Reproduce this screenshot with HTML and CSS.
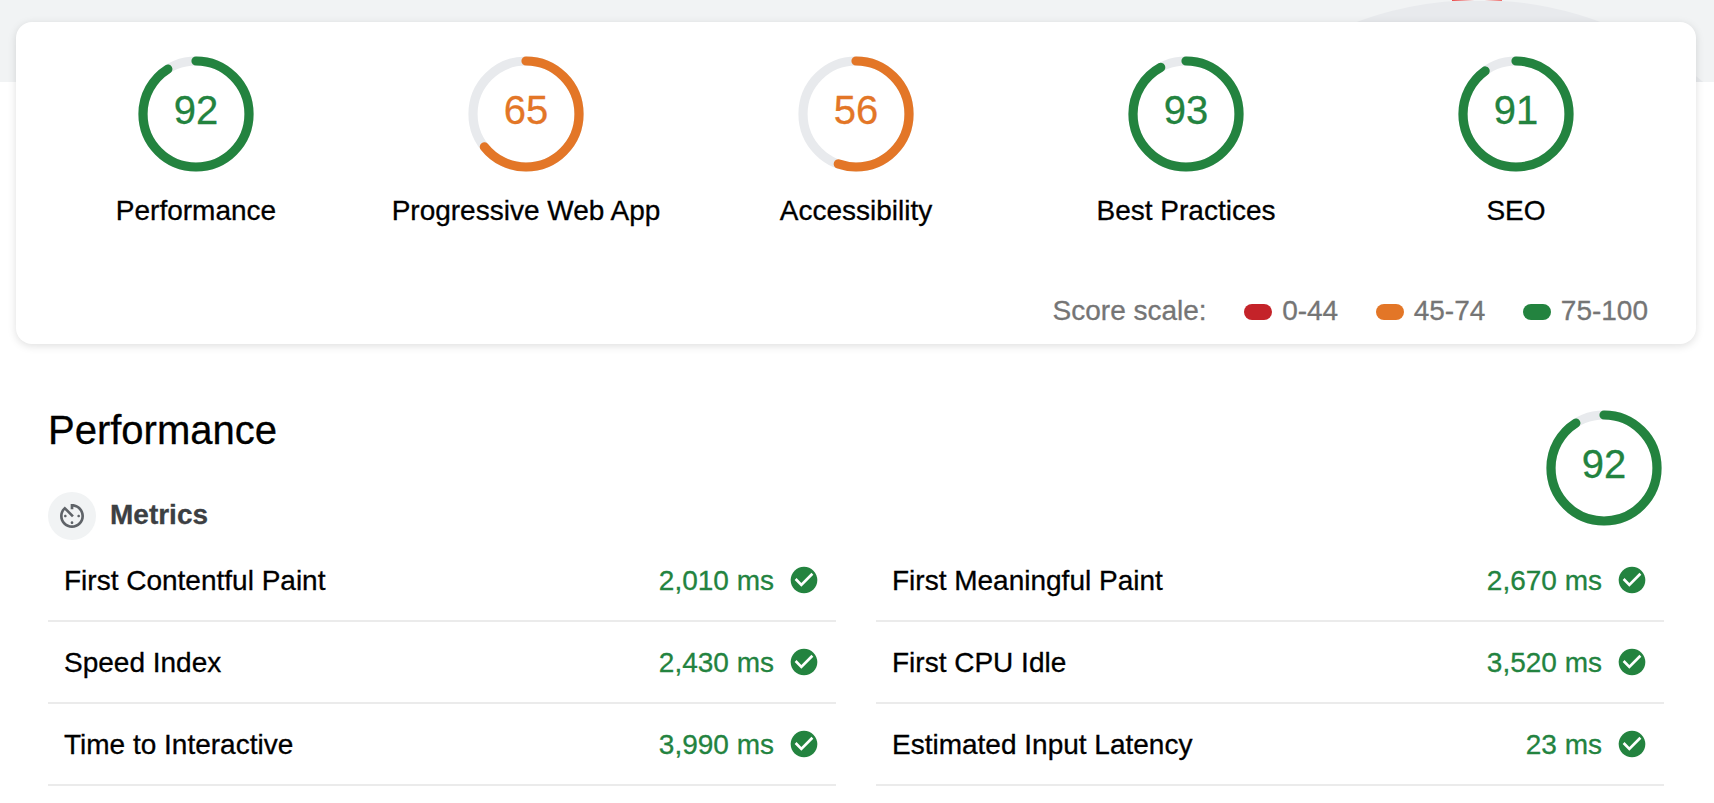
FILE: index.html
```html
<!DOCTYPE html>
<html lang="en">
<head>
<meta charset="utf-8">
<title>Lighthouse Report</title>
<link rel="stylesheet" href="styles.css">
</head>
<body>
<svg class="defs" width="0" height="0" aria-hidden="true">
  <symbol id="check" viewBox="0 0 24 24"><path fill="#23833f" d="M12 2C6.48 2 2 6.48 2 12s4.48 10 10 10 10-4.48 10-10S17.52 2 12 2z"/><path fill="#fff" d="M10 17l-5-5 1.41-1.41L10 14.17l7.59-7.59L19 8l-9 9z"/></symbol>
</svg>
<header class="banner">
  <svg class="banner-art" width="1714" height="82" viewBox="0 0 1714 82">
    <defs><linearGradient id="beam"><stop offset="0" stop-color="#eb4b4b"/><stop offset=".45" stop-color="#f1f3f4"/><stop offset=".65" stop-color="#f1f3f4"/><stop offset="1" stop-color="#ee6a68"/></linearGradient></defs>
    <circle cx="1478.5" cy="349" r="349" fill="#e8eaed"/>
    <rect x="1452" y="0" width="50" height="1" fill="url(#beam)"/>
  </svg>
</header>
<main>
  <section class="card">
    <div class="scores">
      <div class="score pass"><div class="gauge"><svg viewBox="0 0 120 120"><circle class="track" cx="60" cy="60" r="53"/><circle class="arc" cx="60" cy="60" r="53" pathLength="101" stroke-dasharray="92 101"/></svg><span>92</span></div><div class="label">Performance</div></div>
      <div class="score average"><div class="gauge"><svg viewBox="0 0 120 120"><circle class="track" cx="60" cy="60" r="53"/><circle class="arc" cx="60" cy="60" r="53" pathLength="101" stroke-dasharray="65 101"/></svg><span>65</span></div><div class="label">Progressive Web App</div></div>
      <div class="score average"><div class="gauge"><svg viewBox="0 0 120 120"><circle class="track" cx="60" cy="60" r="53"/><circle class="arc" cx="60" cy="60" r="53" pathLength="101" stroke-dasharray="56 101"/></svg><span>56</span></div><div class="label">Accessibility</div></div>
      <div class="score pass"><div class="gauge"><svg viewBox="0 0 120 120"><circle class="track" cx="60" cy="60" r="53"/><circle class="arc" cx="60" cy="60" r="53" pathLength="101" stroke-dasharray="93 101"/></svg><span>93</span></div><div class="label">Best Practices</div></div>
      <div class="score pass"><div class="gauge"><svg viewBox="0 0 120 120"><circle class="track" cx="60" cy="60" r="53"/><circle class="arc" cx="60" cy="60" r="53" pathLength="101" stroke-dasharray="91 101"/></svg><span>91</span></div><div class="label">SEO</div></div>
    </div>
    <div class="scale">
      <span>Score scale:</span>
      <span class="range fail">0-44</span>
      <span class="range average">45-74</span>
      <span class="range pass">75-100</span>
    </div>
  </section>
  <section class="category">
    <div class="category-head">
      <div>
        <h1>Performance</h1>
        <h2><span class="group-icon"><svg width="32" height="32" viewBox="0 0 24 24" fill="#5f6368"><path d="M11 17c0 .55.45 1 1 1s1-.45 1-1-.45-1-1-1-1 .45-1 1zm0-14v4h2V5.08c3.39.49 6 3.39 6 6.92 0 3.87-3.13 7-7 7s-7-3.13-7-7c0-1.68.59-3.22 1.58-4.42L12 13l1.41-1.41-6.8-6.8v.02C4.42 6.45 3 9.05 3 12c0 4.97 4.02 9 9 9 4.97 0 9-4.03 9-9s-4.03-9-9-9h-1zm7 9c0-.55-.45-1-1-1s-1 .45-1 1 .45 1 1 1 1-.45 1-1zM6 12c0 .55.45 1 1 1s1-.45 1-1-.45-1-1-1-1 .45-1 1z"/></svg></span><span class="group-title">Metrics</span></h2>
      </div>
      <div class="score pass"><div class="gauge"><svg viewBox="0 0 120 120"><circle class="track" cx="60" cy="60" r="53"/><circle class="arc" cx="60" cy="60" r="53" pathLength="101" stroke-dasharray="92 101"/></svg><span>92</span></div></div>
    </div>
    <div class="metrics">
      <div class="metric"><span class="name">First Contentful Paint</span><span class="value">2,010 ms</span><svg><use href="#check"/></svg></div>
      <div class="metric"><span class="name">First Meaningful Paint</span><span class="value">2,670 ms</span><svg><use href="#check"/></svg></div>
      <div class="metric"><span class="name">Speed Index</span><span class="value">2,430 ms</span><svg><use href="#check"/></svg></div>
      <div class="metric"><span class="name">First CPU Idle</span><span class="value">3,520 ms</span><svg><use href="#check"/></svg></div>
      <div class="metric"><span class="name">Time to Interactive</span><span class="value">3,990 ms</span><svg><use href="#check"/></svg></div>
      <div class="metric"><span class="name">Estimated Input Latency</span><span class="value">23 ms</span><svg><use href="#check"/></svg></div>
    </div>
  </section>
</main>
</body>
</html>
```
FILE: styles.css
```css
* { box-sizing: border-box; }
body {
  margin: 0;
  height: 803px;
  overflow: hidden;
  background: #fff;
  color: #000;
  font: 28px/36px "Liberation Sans", Arial, sans-serif;
  -webkit-text-stroke: .3px currentColor;
}
svg { display: block; flex: none; }
.defs { position: absolute; }
.banner { height: 82px; background: #f1f3f4; overflow: hidden; }
.card {
  position: relative;
  height: 322px;
  margin: -60px 18px 0 16px;
  padding: 32px 15px 0;
  border-radius: 16px;
  background: #fff;
  box-shadow: 0 2px 8px rgba(0, 0, 0, .13);
}
.pass { --tone: #23833f; }
.average { --tone: #e37627; }
.fail { --tone: #c42329; }
.scores { display: grid; grid-template-columns: repeat(5, 330px); }
.score { display: flex; flex-direction: column; align-items: center; }
.gauge { display: grid; width: 120px; height: 120px; color: var(--tone); }
.gauge > * { grid-area: 1 / 1; }
.gauge circle { fill: none; stroke-width: 9.2px; }
.gauge .track { stroke: #e8eaed; }
.gauge .arc { stroke: var(--tone); stroke-linecap: round; transform: rotate(-90deg); transform-origin: 60px 60px; }
.gauge span { place-self: center; font-size: 40px; line-height: 46px; padding-bottom: 8px; }
.label { margin-top: 19px; }
.scale {
  display: flex;
  justify-content: flex-end;
  gap: 37.5px;
  margin-top: 64px;
  padding-right: 33px;
  color: #757575;
}
.range { display: flex; align-items: center; gap: 10px; }
.range::before { content: ""; width: 28px; height: 16px; margin-top: 1px; border-radius: 8px; background: var(--tone); }
.category { padding: 64px 50px 0 48px; }
.category-head { display: flex; justify-content: space-between; height: 132px; }
h1 { margin: -1px 0 0; font-size: 40px; line-height: 46px; font-weight: 400; }
h2 { display: flex; align-items: center; gap: 14px; margin: 39px 0 0; font-size: 28px; line-height: 36px; color: #3c4043; }
.group-title { padding-bottom: 2px; }
.group-icon { display: grid; place-items: center; width: 48px; height: 48px; border-radius: 50%; background: #f1f3f4; }
.metrics { display: grid; grid-template-columns: 788px 788px; column-gap: 40px; }
.metric { display: flex; align-items: center; height: 82px; padding: 0 16px; border-bottom: 2px solid #ebebeb; }
.metric svg { width: 32px; height: 32px; margin-left: 14px; }
.name, .value { padding-top: 1px; }
.value { margin-left: auto; color: #23833f; }
```
